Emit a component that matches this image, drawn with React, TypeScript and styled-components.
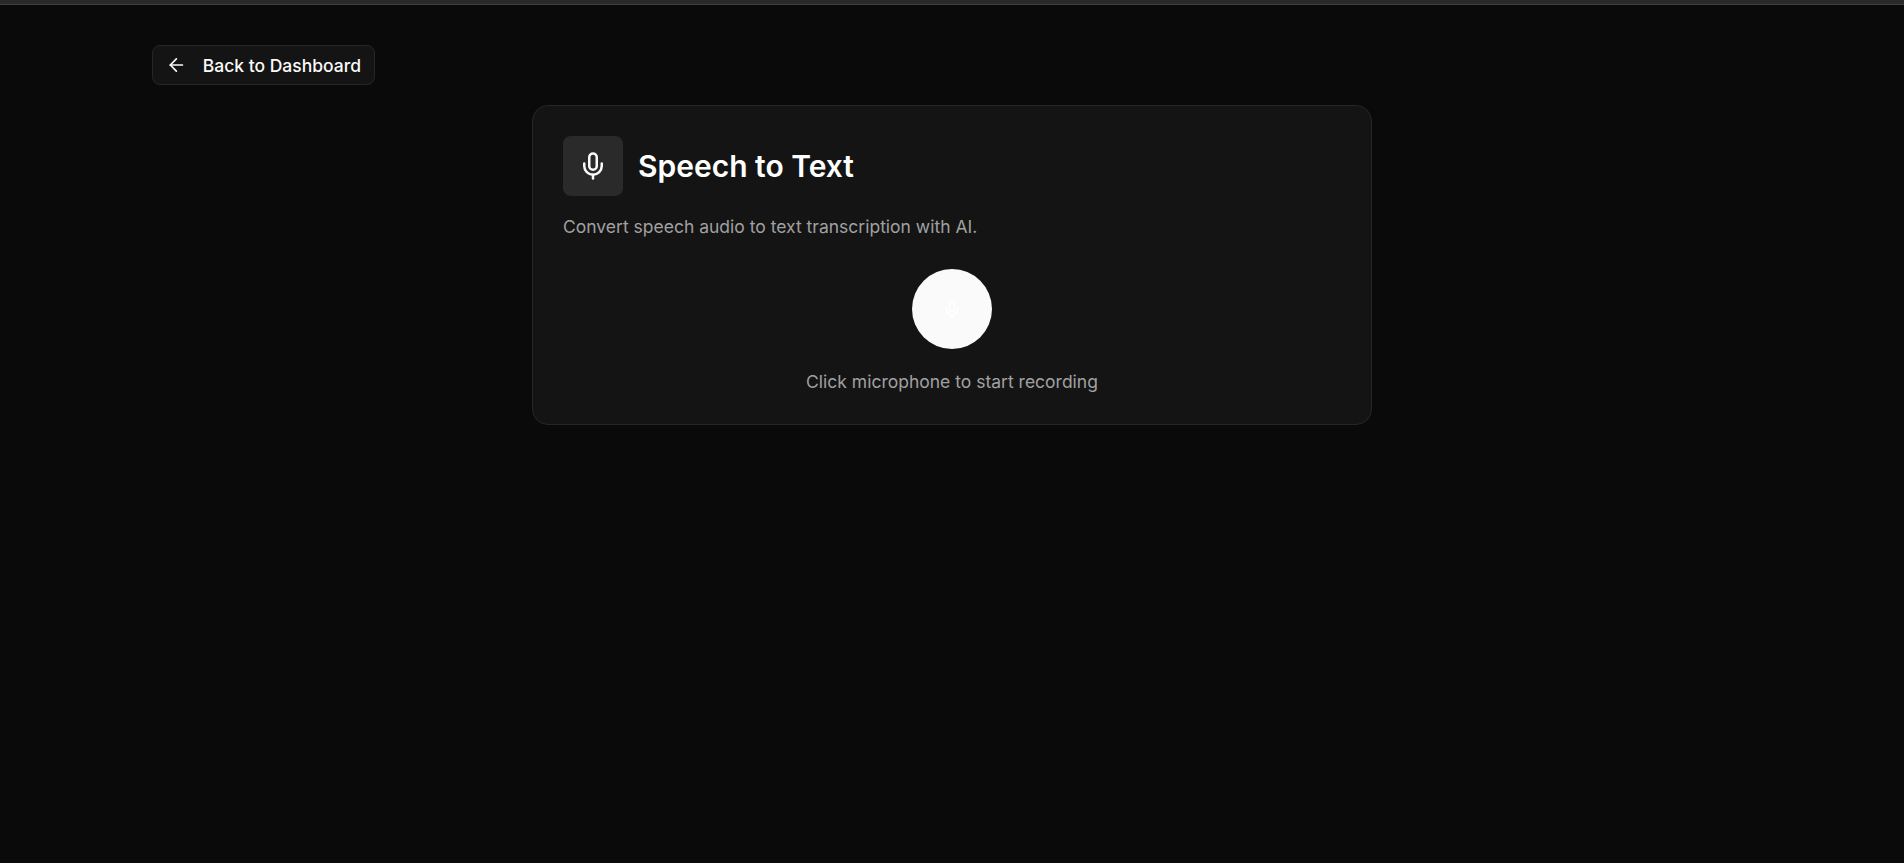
import React from "react";
import styled, { createGlobalStyle } from "styled-components";
import { ArrowLeft, Mic } from "lucide-react";

const Global = createGlobalStyle`
  html, body { margin: 0; padding: 0; background: #0a0a0a; height: 100%; }
  body { font-family: Inter, "Liberation Sans", sans-serif; color: #fafafa; }
`;

const Page = styled.div`
  min-height: 863px;
  background: #0a0a0a;
  display: flex;
  flex-direction: column;
  overflow: hidden;
`;

const TopStrip = styled.div`
  height: 5px;
  background: #2a2a2a;
  border-bottom: 1px solid #3f3f3f;
  box-sizing: border-box;
`;

const Content = styled.main`
  width: 1600px;
  margin: 0 auto;
  padding-top: 40px;
  display: flex;
  flex-direction: column;
  box-sizing: border-box;
`;

const BackButton = styled.button`
  align-self: flex-start;
  height: 40px;
  width: 223px;
  padding: 0 13px;
  display: flex;
  align-items: center;
  gap: 16px;
  background: #141414;
  border: 1px solid #262626;
  border-radius: 8px;
  color: #fafafa;
  font: 500 17.5px/24px Inter, sans-serif;
  white-space: nowrap;
  box-sizing: border-box;
`;

const BackLabel = styled.span`
  padding-top: 2px;
`;

const Card = styled.section`
  width: 840px;
  margin: 20px auto 0;
  padding: 30px;
  background: #141414;
  border: 1px solid #262626;
  border-radius: 16px;
  box-sizing: border-box;
`;

const Header = styled.div`
  display: flex;
  align-items: center;
  gap: 15px;
`;

const IconBox = styled.div`
  width: 60px;
  height: 60px;
  border-radius: 8px;
  background: #2a2a2a;
  display: flex;
  align-items: center;
  justify-content: center;
  color: #fafafa;
`;

const Title = styled.h1`
  margin: 0;
  font: 600 30px/36px Inter, sans-serif;
  color: #ffffff;
`;

const Description = styled.p`
  margin: 17px 0 0;
  font: 400 17.5px/28px Inter, sans-serif;
  color: #a1a1a1;
`;

const Recorder = styled.div`
  margin-top: 28px;
  display: flex;
  flex-direction: column;
  align-items: center;
`;

const RecordButton = styled.button`
  width: 80px;
  height: 80px;
  padding: 0;
  border: none;
  border-radius: 50%;
  background: #fafafa;
  color: #ffffff;
  display: flex;
  align-items: center;
  justify-content: center;
`;

const Hint = styled.p`
  margin: 21px 0 0;
  font: 400 17.5px/24px Inter, sans-serif;
  color: #a1a1a1;
`;

export default function App() {
  return (
    <Page>
      <Global />
      <TopStrip />
      <Content>
        <BackButton>
          <ArrowLeft size={22} strokeWidth={2} />
          <BackLabel>Back to Dashboard</BackLabel>
        </BackButton>
        <Card>
          <Header>
            <IconBox>
              <Mic size={30} strokeWidth={2} />
            </IconBox>
            <Title>Speech to Text</Title>
          </Header>
          <Description>Convert speech audio to text transcription with AI.</Description>
          <Recorder>
            <RecordButton aria-label="Start recording">
              <Mic size={20} strokeWidth={2} />
            </RecordButton>
            <Hint>Click microphone to start recording</Hint>
          </Recorder>
        </Card>
      </Content>
    </Page>
  );
}
